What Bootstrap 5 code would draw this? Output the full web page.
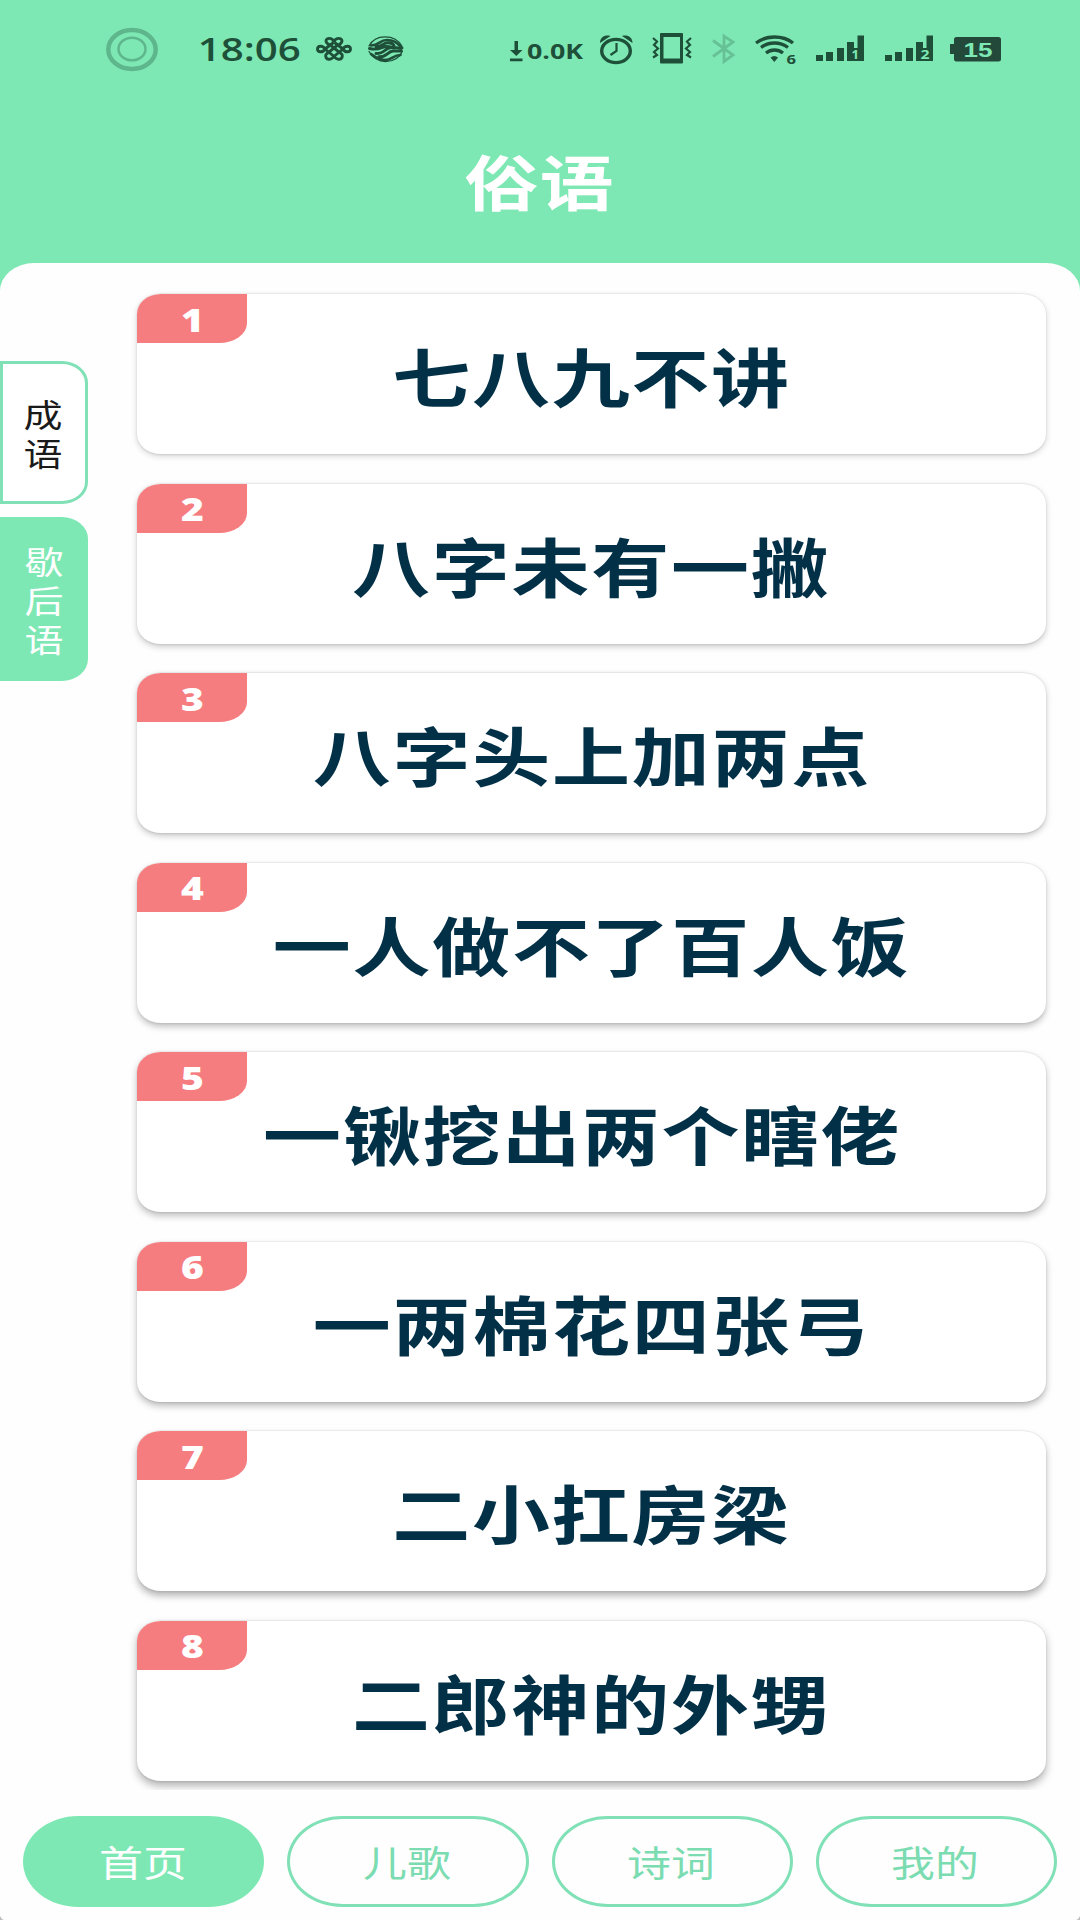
<!DOCTYPE html>
<html lang="zh-CN">
<head>
<meta charset="utf-8">
<meta name="viewport" content="width=device-width, initial-scale=1">
<title>俗语</title>
<link href="https://cdn.jsdelivr.net/npm/bootstrap@5.3.0/dist/css/bootstrap.min.css" rel="stylesheet">
<style>
:root{--mint:#7ee8b4;--mint-line:#80e0b6;--ink:#023047;--coral:#f67d7f;--status:#1e5039}
html,body{height:100%}
body{margin:0;background:var(--mint);font-family:"Noto Sans CJK SC",sans-serif;overflow:hidden}
.screen{width:1080px;height:1920px;position:relative;overflow:hidden}
.wide{display:inline-block;transform:scaleX(1.219);white-space:pre;line-height:1}
.statusbar{height:100px;padding-left:106px;color:var(--status);fill:var(--status)}
.statusbar svg{display:block;height:60px;flex:none}
.clock{width:100px;margin-left:41px;margin-right:1px;padding-bottom:3px;font:600 33px/1 "Open Sans",sans-serif}
.speed{width:57px;margin-left:4px;font:700 22px/1 "Open Sans",sans-serif}
.ln{fill:none;stroke:var(--status)}
.topbar{height:163px}
.topbar h1{margin:0;font-size:60.5px;letter-spacing:1.2px;font-weight:700;color:#fff;padding-top:2px}
.sheet{height:1657px;background:#fefefe;border-radius:34px 34px 0 0/28px 28px 0 0}
.body-row{height:1527px}
.side{width:88px;padding-top:98px;gap:13px}
.side a{border-radius:0 26px 26px 0/0 22px 22px 0;font-size:32px;text-decoration:none}
.side span{line-height:39px;text-align:center;white-space:normal;width:32px}
.tab-line{height:143px;border:3px solid var(--mint-line);color:#1a1a1a;background:#fff;padding:1px 2px 0 0}
.tab-fill{height:164px;background:var(--mint);color:#fff;padding:1px 1px 0 0}
.feed{margin-left:19px;width:973px;padding:31px 34px 0 30px;overflow:hidden;gap:29.5px}
.saying{flex:none;height:160px;border:0;border-radius:24px/20px;background:#fff;
  box-shadow:0 -1px 1px rgba(0,0,0,.05),0 calc(2px + var(--d)*.4px) calc(6px + var(--d)*.3px) rgba(0,0,0,calc(.17 + var(--d)*.018)),0 1px 2px rgba(0,0,0,.09)}
.num{left:0;top:0;width:110px;height:49px;background:var(--coral);border-radius:24px 0 28px 0/20px 0 20px 0;color:#fff;font:800 32px/1 "Open Sans",sans-serif;padding-top:2px}
.phrase{font-size:64px;letter-spacing:1.4px;font-weight:700;color:var(--ink);padding-top:0}
.tabs{height:130px;padding:26px 23px 0;gap:23px}
.tabs a{flex:1 1 0;height:91px;border:3px solid var(--mint-line);border-radius:56px/46px;color:#7bdcb1;font-size:36px;text-decoration:none;padding-right:2px;padding-bottom:2px}
.tabs a.on{background:var(--mint);border-color:var(--mint);color:#fff}
</style>
<script src="https://cdn.jsdelivr.net/npm/bootstrap@5.3.0/dist/js/bootstrap.bundle.min.js"></script>
</head>
<body>
<div class="screen d-flex flex-column">
  <div class="statusbar d-flex align-items-center">
    <svg width="52" viewBox="106 20 52 60"><g class="ln" opacity=".32"><ellipse cx="132" cy="49.500" rx="23.700" ry="19.500" stroke-width="4.500"/><ellipse cx="132" cy="49" rx="13.500" ry="11.300" stroke-width="2.500"/></g></svg>
    <div class="clock d-flex justify-content-center"><span class="wide">18:06</span></div>
    <!-- knot -->
    <svg width="36" style="margin-left:16px" viewBox="316 20 36 60"><g class="ln" stroke-width="2.900"><path d="M325 49c-2-4-7.500-3.500-7.500 0s5.500 4 7.500 0l8.500-6.500M343 49c2-4 7.500-3.500 7.500 0s-5.500 4-7.500 0l-8.500-6.500M325 49l8.500 7M343 49l-8.500 7"/><path d="M334 42.500c-1-5.500-8-5-8-1.500 0 3 4 3.500 6 5.500l7 5.500c3 2 4 3 3 5.500-1.500 3-7 2-8-2M334 42.500c1-5.500 8-5 8-1.500 0 3-4 3.500-6 5.500l-7 5.500c-3 2-4 3-3 5.500 1.500 3 7 2 8-2"/></g></svg>
    <!-- waves -->
    <svg width="36" style="margin-left:16px" viewBox="368 20 36 60"><g class="ln" stroke-width="1.300" stroke-linecap="round"><path d="M369 46c3-6 9-9.200 16-9.200 8 0 14 4 17 9.500M402.500 51c-3 7-9 10.500-17 10.500-7 0-13-4-16.500-10"/><path stroke-width="2.600" d="M371 45.500c9 0 8-5.500 16-5.500 6 0 10 2 13.500 6.500M371 54c4 3 7.500 6 14 6 7 0 8-5 15.500-5"/><path stroke-width="2.900" d="M376 46.800c7-.5 7-4 12-4 3 0 5 1 6 2.700M369.500 48.500c10 2.500 12-2 17-2 4 0 5 1 7 1.500M376 53.500c10 0 8-5.500 15-6 4-.3 7 1 11 .5M379 56.800c9 0 8-5.300 14-5.800 3-.2 5 .5 8 0"/></g></svg>
    <!-- download speed -->
    <svg width="13" style="margin-left:106px" viewBox="510 20 13 60"><path d="M514.500 41h3.500v9h4.500l-6.200 6-6.300-6h4.500zM510 58.500h12.500v2.700H510z"/></svg>
    <div class="speed d-flex justify-content-center"><span class="wide">0.0K</span></div>
    <!-- alarm -->
    <svg width="33" style="margin-left:16px" viewBox="600 20 33 60"><path d="M600 43c0-6 5-8.500 10.500-7zM632.500 43c0-6-5-8.500-10.500-7z"/><ellipse class="ln" cx="616" cy="51" rx="14.300" ry="11.600" stroke-width="3.400"/><path class="ln" stroke-width="2.200" d="M616.500 43v8l-6 4"/></svg>
    <!-- vibrate -->
    <svg width="40" style="margin-left:19px" viewBox="652 20 40 60"><path fill-rule="evenodd" d="M662 33h20q1 0 1 1v28.500q0 1-1 1h-21q-1 0-1-1V34q0-1 1-1zM663.500 37v21.500h16.500V37z"/><path class="ln" stroke-width="2.200" d="M653 38l4 3.500-3 3.500 4 3.500-4 3.500 3 3-4 2.500M691 38l-4 3.500 3 3.500-4 3.500 4 3.500-3 3 4 2.500"/></svg>
    <!-- bluetooth -->
    <svg width="24" style="margin-left:20px" viewBox="712 20 24 60"><path class="ln" opacity=".25" stroke-width="2.800" d="M713 40.500l20 14.500-9 6.500V36l9 6-20 14.500"/></svg>
    <!-- wifi -->
    <svg width="42" style="margin-left:19px" viewBox="755 20 42 60"><g class="ln" stroke-width="3.300"><path d="M756 43c10-8 27-8 37 0M761 47.500c8-6 19-6 27 0M766 53c5-4 12-4 17 0"/></g><path d="M770.500 57.500q3.800-3 7.600 0l-3.800 4.500z"/><text x="786.500" y="64" font-family="Open Sans" font-weight="700" font-size="12" textLength="9.500" lengthAdjust="spacingAndGlyphs">6</text></svg>
    <!-- signal, SIM 1 and SIM 2 -->
    <svg width="48" style="margin-left:19px" viewBox="816 20 48 60"><path d="M816 55h7v6h-7zM826 52h7v9h-7zM837 48h7v13h-7zM847 42h7v6h3.500V35.500h6.500V61H847z"/><text x="851.500" y="59" fill="#7ee8b4" font-family="Open Sans" font-weight="700" font-size="11.500" textLength="7.500" lengthAdjust="spacingAndGlyphs">1</text></svg>
    <svg width="48" style="margin-left:21px" viewBox="816 20 48 60"><path d="M816 55h7v6h-7zM826 52h7v9h-7zM837 48h7v13h-7zM847 42h7v6h3.500V35.500h6.500V61H847z"/><text x="851.500" y="59" fill="#7ee8b4" font-family="Open Sans" font-weight="700" font-size="11.500" textLength="9" lengthAdjust="spacingAndGlyphs">2</text></svg>
    <!-- battery -->
    <svg width="51" style="margin-left:17px" viewBox="950 20 51 60"><path fill="#23493a" d="M956.500 37h42q2.500 0 2.500 2.500v19.500q0 2.500-2.500 2.500h-42q-2.500 0-2.500-2.500v-5h-4V44h4v-4.500q0-2.500 2.500-2.500z"/><text x="963.500" y="56.500" fill="#7ee8b4" font-family="Liberation Sans" font-weight="700" font-size="21" textLength="29" lengthAdjust="spacingAndGlyphs">15</text></svg>
  </div>

  <header class="topbar d-flex justify-content-center align-items-start pt-5"><h1 class="wide">俗语</h1></header>

  <main class="sheet d-flex flex-column">
    <div class="body-row d-flex">
      <nav class="side d-flex flex-column">
        <a href="#" class="tab-line d-flex align-items-center justify-content-center"><span class="wide">成语</span></a>
        <a href="#" class="tab-fill d-flex align-items-center justify-content-center"><span class="wide">歇后语</span></a>
      </nav>
      <section class="feed d-flex flex-column">
        <article class="saying card justify-content-center align-items-center" style="--d:0"><div class="num position-absolute d-flex justify-content-center align-items-center"><span class="wide">1</span></div><div class="phrase"><span class="wide">七八九不讲</span></div></article>
        <article class="saying card justify-content-center align-items-center" style="--d:1"><div class="num position-absolute d-flex justify-content-center align-items-center"><span class="wide">2</span></div><div class="phrase"><span class="wide">八字未有一撇</span></div></article>
        <article class="saying card justify-content-center align-items-center" style="--d:2"><div class="num position-absolute d-flex justify-content-center align-items-center"><span class="wide">3</span></div><div class="phrase"><span class="wide">八字头上加两点</span></div></article>
        <article class="saying card justify-content-center align-items-center" style="--d:3"><div class="num position-absolute d-flex justify-content-center align-items-center"><span class="wide">4</span></div><div class="phrase"><span class="wide">一人做不了百人饭</span></div></article>
        <article class="saying card justify-content-center align-items-center" style="--d:4"><div class="num position-absolute d-flex justify-content-center align-items-center"><span class="wide">5</span></div><div class="phrase"><span class="wide">一锹挖出两个瞎佬&nbsp;</span></div></article>
        <article class="saying card justify-content-center align-items-center" style="--d:5"><div class="num position-absolute d-flex justify-content-center align-items-center"><span class="wide">6</span></div><div class="phrase"><span class="wide">一两棉花四张弓</span></div></article>
        <article class="saying card justify-content-center align-items-center" style="--d:6"><div class="num position-absolute d-flex justify-content-center align-items-center"><span class="wide">7</span></div><div class="phrase"><span class="wide">二小扛房梁</span></div></article>
        <article class="saying card justify-content-center align-items-center" style="--d:7"><div class="num position-absolute d-flex justify-content-center align-items-center"><span class="wide">8</span></div><div class="phrase"><span class="wide">二郎神的外甥</span></div></article>
      </section>
    </div>
    <nav class="tabs d-flex">
      <a href="#" class="on d-flex align-items-center justify-content-center"><span class="wide">首页</span></a>
      <a href="#" class="d-flex align-items-center justify-content-center"><span class="wide">儿歌</span></a>
      <a href="#" class="d-flex align-items-center justify-content-center"><span class="wide">诗词</span></a>
      <a href="#" class="d-flex align-items-center justify-content-center"><span class="wide">我的</span></a>
    </nav>
  </main>
  <!-- rounded display corners -->
  <svg class="position-absolute bottom-0 start-0" width="4" height="4"><path fill="#bbb" d="M0 0q1 3 4 4H0z"/></svg>
  <svg class="position-absolute bottom-0 end-0" width="4" height="4"><path fill="#bbb" d="M4 0q-1 3-4 4h4z"/></svg>
</div>
</body>
</html>
